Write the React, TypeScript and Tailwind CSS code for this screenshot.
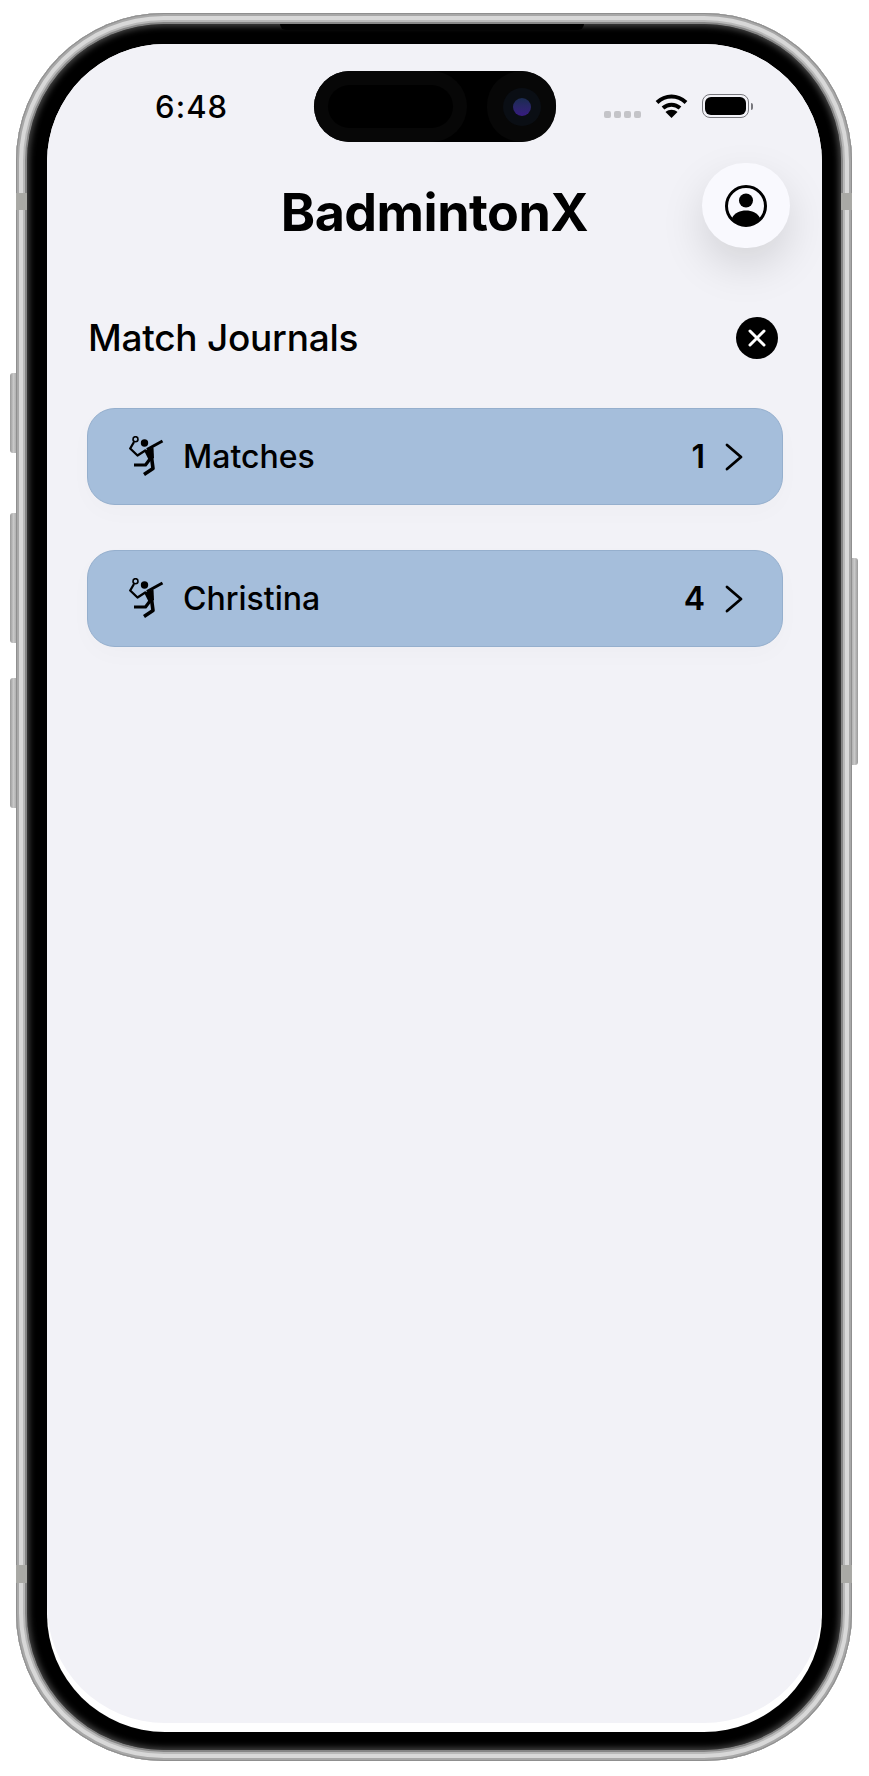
const font = "font-['Inter','Liberation_Sans',sans-serif]"

function PlayerIcon() {
  return (
    <svg viewBox="0 0 35 41" className="w-[35px] h-[41px] text-black" fill="none" stroke="currentColor" strokeLinejoin="round">
      {/* racket */}
      <circle cx="6.5" cy="3.2" r="2.5" strokeWidth="1.6" />
      <path d="M5 6 L1.2 12.5 L8.5 19.5 L17 14" strokeWidth="2.3" />
      {/* head */}
      <circle cx="15.5" cy="7" r="3.7" fill="currentColor" stroke="none" />
      {/* throwing arm, torso and legs */}
      <path d="M33.5 5 L18 13.5" strokeWidth="3" />
      <path d="M15 14.5 L24.5 11.5 L25 22 L20 24.5 Z" fill="currentColor" stroke="none" />
      <path d="M22.5 21 L16.5 29 L5 29" strokeWidth="3.2" />
      <path d="M22.5 21 L24 32.5 L15 38.5" strokeWidth="3.6" />
    </svg>
  )
}

function JournalRow({ name, count }: { name: string; count: number }) {
  return (
    <div className="flex items-center h-[97px] rounded-[28px] bg-[#a5bedb] border border-[#95afcd] pl-[41px] pr-[39px] shadow-[0_8px_24px_rgba(0,0,0,0.02)]">
      <PlayerIcon />
      <span className="ml-[19px] text-[32px] font-medium text-black">{name}</span>
      <span className="ml-auto text-[32px] font-semibold text-black">{count}</span>
      <svg viewBox="0 0 18 28" className="ml-[20px] w-[18px] h-[28px]" fill="none" stroke="black" strokeWidth="2.8" strokeLinecap="round" strokeLinejoin="round">
        <path d="M2 2 L16 14 L2 26" />
      </svg>
    </div>
  )
}

function StatusBar() {
  return (
    <div className="flex items-center h-[24px] pl-[108px] pr-[69px]">
      <span className="text-[31px] font-medium leading-none tracking-[1.1px] text-black">6:48</span>
      <div className="ml-auto flex items-end gap-[3px] self-end">
        <span className="w-[7px] h-[7px] rounded-[2px] bg-[#c4c4c8]" />
        <span className="w-[7px] h-[7px] rounded-[2px] bg-[#c4c4c8]" />
        <span className="w-[7px] h-[7px] rounded-[2px] bg-[#c4c4c8]" />
        <span className="w-[7px] h-[7px] rounded-[2px] bg-[#c4c4c8]" />
      </div>
      <svg viewBox="0 0 33 24" className="ml-[14px] w-[33px] h-[24px]" fill="none" stroke="black" strokeWidth="4">
        <path d="M2 8.5 C10.5 0.5 22.5 0.5 31 8.5" />
        <path d="M8 14 C13 9.5 20 9.5 25 14" />
        <path d="M16.5 24 L10.5 18 C14 15 19 15 22.5 18 Z" fill="black" stroke="none" />
      </svg>
      <div className="ml-[14px] flex items-center">
        <div className="w-[47px] h-[24px] rounded-[8px] border border-[#77777c] p-[2px]">
          <div className="w-full h-full rounded-[6px] bg-black" />
        </div>
        <span className="ml-[2px] w-[2px] h-[7px] rounded-r-full bg-[#77777c]" />
      </div>
    </div>
  )
}

export default function App() {
  return (
    <div className={`relative w-[869px] h-[1776px] bg-white overflow-hidden pt-[13px] pl-[16px] ${font}`}>
      {/* side buttons */}
      <span className="absolute left-[10px] top-[373px] w-[7px] h-[80px] rounded-l-[3px] bg-gradient-to-r from-[#9a9a9a] via-[#c8c8c8] to-[#a8a8a8]" />
      <span className="absolute left-[10px] top-[513px] w-[7px] h-[130px] rounded-l-[3px] bg-gradient-to-r from-[#9a9a9a] via-[#c8c8c8] to-[#a8a8a8]" />
      <span className="absolute left-[10px] top-[678px] w-[7px] h-[130px] rounded-l-[3px] bg-gradient-to-r from-[#9a9a9a] via-[#c8c8c8] to-[#a8a8a8]" />
      <span className="absolute left-[851px] top-[558px] w-[7px] h-[207px] rounded-r-[3px] bg-gradient-to-l from-[#9a9a9a] via-[#c8c8c8] to-[#a8a8a8]" />

      {/* phone frame */}
      <div className="relative w-[836px] h-[1748px] rounded-[148px] bg-[#c9c9c9] p-[11px] shadow-[inset_0_0_0_1px_#8f8f8f,inset_0_0_0_3px_#a8a8a8,inset_0_0_0_7px_#d8d8d8,inset_0_0_0_9px_#b8b8b8,inset_0_0_0_11px_#858585]">
        {/* antenna bands */}
        <span className="absolute left-0 top-[180px] w-[11px] h-[17px] bg-[#a9a9a5]" />
        <span className="absolute right-0 top-[180px] w-[11px] h-[17px] bg-[#a9a9a5]" />
        <span className="absolute left-0 top-[1552px] w-[11px] h-[18px] bg-[#a9a9a5]" />
        <span className="absolute right-0 top-[1552px] w-[11px] h-[18px] bg-[#a9a9a5]" />

        {/* bezel */}
        <div className="relative w-full h-full rounded-[137px] bg-black pt-[20px] pl-[20px] pr-[19px] shadow-[inset_0_0_6px_2px_#4a4a4a]">
          {/* black band under the top edge */}
          <span className="absolute left-[253px] top-0 w-[304px] h-[6px] rounded-b-[6px] bg-black" />

          {/* screen */}
          <div className="relative w-full h-[1688px] rounded-[118px] bg-white overflow-hidden">
            <div className="h-[1679px] rounded-b-[118px] bg-[#f2f2f7] pt-[50px]">
              <StatusBar />

              {/* header */}
              <div className="grid grid-cols-[1fr_auto_1fr] items-center mt-[45px]">
                <div />
                <h1 className="mt-[15px] text-[52px] font-bold leading-none tracking-[-0.5px] text-black">BadmintonX</h1>
                <div className="flex justify-end pr-[32px]">
                  <button className="flex items-center justify-center w-[88px] h-[85px] rounded-full bg-[#f9f9fe] shadow-[0_18px_44px_rgba(0,0,0,0.13)]">
                    <svg viewBox="0 0 42 42" className="w-[42px] h-[42px]">
                      <circle cx="21" cy="21" r="19.5" fill="none" stroke="black" strokeWidth="3" />
                      <circle cx="21" cy="15.5" r="7" fill="black" />
                      <path d="M7 33 C10 27.5 15 25.5 21 25.5 C27 25.5 32 27.5 35 33 C31.5 37.5 26.5 40 21 40 C15.5 40 10.5 37.5 7 33 Z" fill="black" />
                    </svg>
                  </button>
                </div>
              </div>

              {/* section title */}
              <div className="flex items-center justify-between mt-[69px] pl-[41px] pr-[44px]">
                <h2 className="pb-[2px] text-[37px] font-medium leading-none tracking-[-0.25px] text-black">Match Journals</h2>
                <button className="flex items-center justify-center w-[42px] h-[42px] rounded-full bg-black">
                  <svg viewBox="0 0 20 20" className="w-[20px] h-[20px]" fill="none" stroke="white" strokeWidth="3" strokeLinecap="round">
                    <path d="M3 3 L17 17 M17 3 L3 17" />
                  </svg>
                </button>
              </div>

              <div className="flex flex-col gap-[45px] mt-[49px] ml-[40px] mr-[39px]">
                <JournalRow name="Matches" count={1} />
                <JournalRow name="Christina" count={4} />
              </div>
            </div>

            {/* dynamic island */}
            <div className="absolute left-[267px] top-[27px] flex items-center justify-between w-[242px] h-[71px] rounded-full bg-black">
              <span className="flex items-center justify-center w-[153px] h-[71px] rounded-full bg-[#070707]">
                <span className="w-[125px] h-[43px] rounded-full bg-black" />
              </span>
              <span className="flex items-center justify-center w-[69px] h-[71px] rounded-full bg-[#070707]">
                <span className="flex items-center justify-center w-[38px] h-[38px] rounded-full bg-[#0a0e14]">
                  <span className="w-[18px] h-[18px] rounded-full bg-gradient-to-b from-[#1a2b50] to-[#371a80]" />
                </span>
              </span>
            </div>
          </div>
        </div>
      </div>
    </div>
  )
}
